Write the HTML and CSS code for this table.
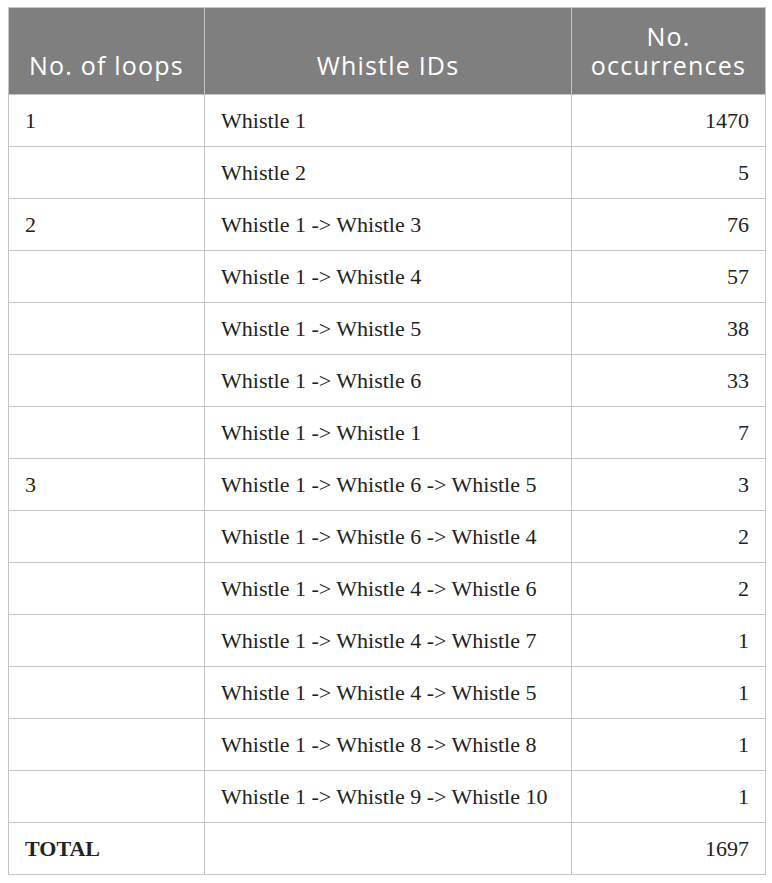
FILE: index.html
```html
<!DOCTYPE html>
<html>
<head>
<meta charset="utf-8">
<link rel="stylesheet" href="styles.css">
</head>
<body>
<table class="data">
  <colgroup>
    <col class="c1"><col class="c2"><col class="c3">
  </colgroup>
  <thead>
    <tr><th>No. of loops</th><th>Whistle IDs</th><th>No.<br>occurrences</th></tr>
  </thead>
  <tbody>
    <tr><td>1</td><td>Whistle 1</td><td class="num">1470</td></tr>
    <tr><td></td><td>Whistle 2</td><td class="num">5</td></tr>
    <tr><td>2</td><td>Whistle 1 -&gt; Whistle 3</td><td class="num">76</td></tr>
    <tr><td></td><td>Whistle 1 -&gt; Whistle 4</td><td class="num">57</td></tr>
    <tr><td></td><td>Whistle 1 -&gt; Whistle 5</td><td class="num">38</td></tr>
    <tr><td></td><td>Whistle 1 -&gt; Whistle 6</td><td class="num">33</td></tr>
    <tr><td></td><td>Whistle 1 -&gt; Whistle 1</td><td class="num">7</td></tr>
    <tr><td>3</td><td>Whistle 1 -&gt; Whistle 6 -&gt; Whistle 5</td><td class="num">3</td></tr>
    <tr><td></td><td>Whistle 1 -&gt; Whistle 6 -&gt; Whistle 4</td><td class="num">2</td></tr>
    <tr><td></td><td>Whistle 1 -&gt; Whistle 4 -&gt; Whistle 6</td><td class="num">2</td></tr>
    <tr><td></td><td>Whistle 1 -&gt; Whistle 4 -&gt; Whistle 7</td><td class="num">1</td></tr>
    <tr><td></td><td>Whistle 1 -&gt; Whistle 4 -&gt; Whistle 5</td><td class="num">1</td></tr>
    <tr><td></td><td>Whistle 1 -&gt; Whistle 8 -&gt; Whistle 8</td><td class="num">1</td></tr>
    <tr><td></td><td>Whistle 1 -&gt; Whistle 9 -&gt; Whistle 10</td><td class="num">1</td></tr>
    <tr><td class="total">TOTAL</td><td></td><td class="num">1697</td></tr>
  </tbody>
</table>
</body>
</html>
```
FILE: styles.css
```css
html, body {
  margin: 0;
  padding: 0;
  background: #ffffff;
}
body {
  padding: 7px 8px 0 8px;
}
.data {
  border-collapse: collapse;
  width: 757px;
  table-layout: fixed;
  border: 1px solid #c4c4c4;
}
.c1 { width: 196px; }
.c2 { width: 367px; }
.c3 { width: 194px; }
.data th {
  background: #7f7f7f;
  color: #ffffff;
  font-family: "Open Sans", Lato, sans-serif;
  font-weight: 400;
  font-size: 25px;
  letter-spacing: 1.2px;
  line-height: 29px;
  text-align: center;
  vertical-align: bottom;
  height: 87px;
  padding: 0 8px 14px 8px;
  box-sizing: border-box;
  border: 1px solid #c4c4c4;
  border-top: none;
}
.data td {
  font-family: "Liberation Serif", "Times New Roman", serif;
  font-size: 22px;
  color: #222222;
  height: 52px;
  padding: 0 16px;
  box-sizing: border-box;
  border: 1px solid #c4c4c4;
  vertical-align: middle;
}
.data td.num {
  text-align: right;
}
.data td.total {
  font-weight: bold;
}
```
